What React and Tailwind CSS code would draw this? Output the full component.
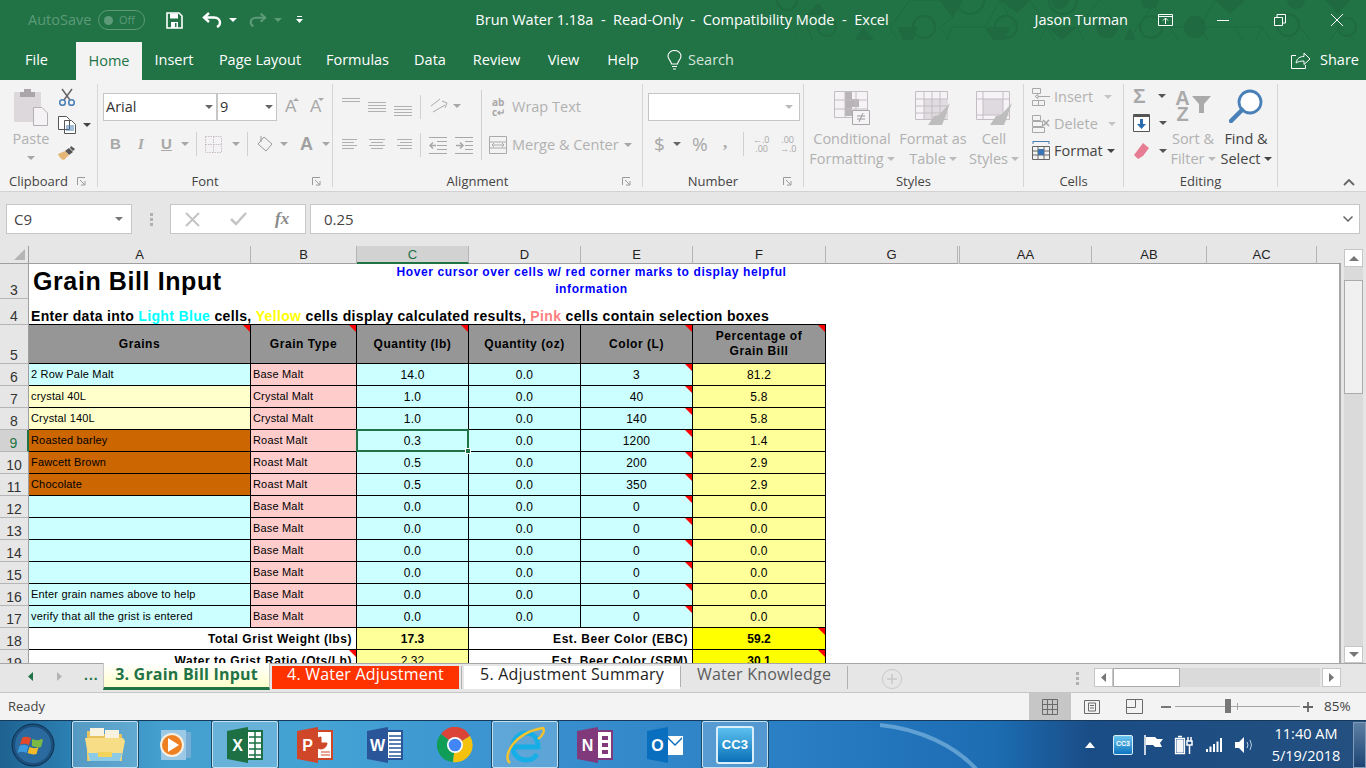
import React from "react";

const Caret = ({ c = "#a6a6a6", className = "" }) => (
  <svg width="8" height="4" viewBox="0 0 8 4" className={"shrink-0 " + className}><path d="M0 0h8L4 4z" fill={c} /></svg>
);

const Pattern = () => {
  const outC = [[787,0,10],[827,27,9],[924,27,11],[970,0,14],[1006,27,11],[1061,52,11],[1063,0,14],[1151,27,11],[1246,52,11],[1288,25,11],[1335,52,11],[1347,27,9]];
  const fillC = [[970,52,10],[1107,27,11],[1153,52,10],[1060,0,9],[1150,0,9],[1195,27,11],[1296,0,9]];
  const fillT = ["897,27 918,27 908,52","985,27 1010,27 1000,52","863,27 848,52 870,52 873,38","940,0 963,0 953,17","1000,0 1030,0 1017,13","1047,27 1077,27 1062,40","818,3 807,15 828,15","1095,27 1118,27 1107,14","1118,52 1140,52 1130,27","1215,0 1245,0 1230,14","1285,52 1310,52 1298,62","1325,0 1350,0 1338,14"];
  const lines = ["795,38 803,52 818,52 807,27 818,8 ","905,52 890,27 910,0 940,0 953,17 940,27 958,52 940,52 953,27","953,27 985,27 1000,0 1015,27","1033,52 1047,27 1062,52 1090,52 1077,27 1100,0","1123,52 1137,27 1153,5 1170,27 1185,52 1215,52 1200,27 1215,0","1235,27 1250,52 1262,27 1278,52 1300,27 1320,52 1340,27 1366,52","1170,27 1200,27 1230,27 1262,27","1030,27 1047,27 1030,0"];
  return (
    <svg className="absolute left-0 top-0 pointer-events-none" width="1366" height="80" viewBox="0 0 1366 80" fill="none">
      {lines.map((p, i) => <polyline key={i} points={p} stroke="#1f6a40" strokeWidth="1" />)}
      {outC.map(([x, y, r], i) => <circle key={i} cx={x} cy={y} r={r} stroke="#1f6a40" strokeWidth="2" />)}
      {fillC.map(([x, y, r], i) => <circle key={i} cx={x} cy={y} r={r} fill="#1f6a40" />)}
      {fillT.map((p, i) => <polygon key={i} points={p} fill="#1f6a40" />)}
    </svg>
  );
};

const TitleBar = () => (
  <div className="relative h-[40px] flex items-center bg-[#217346] text-white text-[14.5px]">
    <Pattern />
    <div className="relative flex items-center w-[460px] pl-[28px] shrink-0">
      <span className="text-[#5c9a78] w-[70px] whitespace-nowrap">AutoSave</span>
      <div className="w-[47px] h-[20px] rounded-full border border-[#5c9a78] flex items-center pl-[5px] text-[#5c9a78] text-[11px] gap-[6px]">
        <div className="w-[9px] h-[9px] rounded-full bg-[#5c9a78]" />Off
      </div>
      <svg className="ml-[21px]" width="17" height="17" viewBox="0 0 17 17"><path d="M1 1h12l3 3v12H1z" fill="none" stroke="#fff" strokeWidth="1.6" /><rect x="4" y="1.5" width="8" height="5" fill="#fff" /><rect x="5" y="10" width="7" height="6" fill="#fff" /><rect x="9" y="11" width="1.5" height="4" fill="#217346" /></svg>
      <svg className="ml-[19px]" width="21" height="16" viewBox="0 0 21 16" fill="none"><path d="M7 1L2 5.500 7 10" stroke="#fff" strokeWidth="2.400" /><path d="M2 5.500h10c4 0 6 2.500 6 5s-1 3.500-3 4.500" stroke="#fff" strokeWidth="2.400" /></svg>
      <Caret c="#fff" className="ml-[6px]" />
      <svg className="ml-[11px]" width="19" height="16" viewBox="0 0 21 16" fill="none"><path d="M14 1l5 4.500L14 10" stroke="#5c9a78" strokeWidth="2.400" /><path d="M19 5.500H9c-4 0-6 2.500-6 5s1 3.500 3 4.500" stroke="#5c9a78" strokeWidth="2.400" /></svg>
      <Caret c="#5c9a78" className="ml-[7px]" />
      <svg className="ml-[14px]" width="7" height="8" viewBox="0 0 7 8"><path d="M1 0h5v1H1zM0 3h7L3.500 7z" fill="#fff" /></svg>
    </div>
    <div className="relative w-[444px] shrink-0 text-center whitespace-pre">Brun Water 1.18a  -  Read-Only  -  Compatibility Mode  -  Excel</div>
    <div className="relative w-[224px] text-right shrink-0 whitespace-nowrap">Jason Turman</div>
    <div className="relative flex items-center">
      <svg className="ml-[30px]" width="15" height="12" viewBox="0 0 15 12" fill="none" stroke="#fff"><path d="M.5.500h14v11H.500zM.5 2.500h14M7.500 10V4.500M5 6.500l2.500-2.500L10 6.500" /></svg>
      <div className="ml-[44px] w-[12px] h-px bg-white" />
      <svg className="ml-[45px]" width="12" height="12" viewBox="0 0 12 12" fill="none" stroke="#fff"><path d="M.5 3.500h8v8h-8zM3 3V.500h8.500V9H9" /></svg>
      <svg className="ml-[45px]" width="12" height="12" viewBox="0 0 12 12" stroke="#fff"><path d="M0 0l12 12M12 0L0 12" /></svg>
    </div>
  </div>
);

const tabs = [["Insert","w-[64px]"],["Page Layout","w-[108px]"],["Formulas","w-[87px]"],["Data","w-[58px]"],["Review","w-[75px]"],["View","w-[59px]"],["Help","w-[60px]"]];

const TabBar = () => (
  <div className="relative h-[40px] flex items-end bg-[#217346] text-white text-[14.5px]">
    <div className="w-[51px] ml-[11px] mr-[14px] h-[40px] leading-[40px] text-center">File</div>
    <div className="w-[66px] h-[38px] leading-[38px] bg-[#f3f3f3] text-[#217346] text-center">Home</div>
    {tabs.map(([t, w]) => <div key={t} className={"h-[40px] leading-[40px] text-center whitespace-nowrap " + w}>{t}</div>)}
    <div className="flex items-center h-[40px] ml-[14px] text-[#d4e3da]">
      <svg width="15" height="20" viewBox="0 0 15 20" fill="none" stroke="#fff" strokeWidth="1.100"><path d="M4.500 14c0-3-3.500-4-3.500-8a6.500 5.500 0 0 1 13 0c0 4-3.500 5-3.500 8zM5 16.500h5M6 19h3" /></svg>
      <span className="ml-[6px]">Search</span>
    </div>
    <div className="flex items-center h-[40px] ml-auto mr-[7px] pr-0">
      <svg width="20" height="18" viewBox="0 0 20 18" fill="none" stroke="#fff"><path d="M5 4.500H.5v13h14V14M5 12c1-5 4-6.500 8-6.500V2l6 6-6 5.500V10c-3 0-6 .5-8 2z" /></svg>
      <span className="ml-[9px]">Share</span>
    </div>
  </div>
);

const Group = ({ w, label, launcher, children }) => (
  <div className={"flex flex-col h-[103px] shrink-0 border-r border-[#d6d6d6] " + w}>
    <div className="h-[91px] flex">{children}</div>
    <div className="flex items-center h-[12px] text-[13px] text-[#444]">
      <div className="flex-1 text-center leading-[12px] whitespace-nowrap">{label}</div>
      {launcher ? (
        <div className="w-[20px] flex">
          <svg width="9" height="9" viewBox="0 0 9 9" fill="none" stroke="#9a9a9a"><path d="M.5 8V.500H8M3 3l4.500 4.500M8 4v4H4" /></svg>
        </div>
      ) : null}
    </div>
  </div>
);

const Dis = "#a8a8a8";
const Lines = ({ ws, gap = 3, c = "#b0b0b0", align = "left" }) => (
  <svg width="18" height={ws.length * gap} viewBox={`0 0 18 ${ws.length * gap}`} stroke={c}>
    {ws.map((w, i) => {
      const x = align === "left" ? 0 : align === "center" ? (18 - w) / 2 : 18 - w;
      return <path key={i} d={`M${x} ${i * gap + 0.5}h${w}`} />;
    })}
  </svg>
);

const Clipboard = () => (
  <Group w="w-[98px]" label="Clipboard" launcher>
    <div className="w-[58px] flex flex-col items-center pt-[4px] pl-[4px]">
      <svg width="34" height="38" viewBox="0 0 34 38"><path d="M0 4h27v30H0z" fill="#dcd8dc" /><path d="M6 4h15v5H6zM10 1h7v4h-7z" fill="#a9a5a9" /><path d="M19.500 19.500H28l5.500 5.500v12.500h-14z" fill="#f6f3f6" stroke="#b4b0b4" /></svg>
      <span className="text-[14.5px] text-[#b1b1b1] leading-[20px] mt-[3px]">Paste</span>
      <Caret className="mt-[7px]" />
    </div>
    <div className="flex flex-col pt-[4px]">
      <svg width="18" height="18" viewBox="0 0 18 18" fill="none"><path d="M4 1l8 11M14 1L6 12" stroke="#666" strokeWidth="1.500" /><circle cx="4.500" cy="14.500" r="2.800" stroke="#4a7fb5" strokeWidth="1.500" /><circle cx="13.500" cy="14.500" r="2.800" stroke="#4a7fb5" strokeWidth="1.500" /></svg>
      <div className="flex items-center mt-[10px]">
        <svg width="18" height="18" viewBox="0 0 18 18" fill="#fff" stroke="#555"><path d="M.5.500h8l3 3v10H.500zM6.500 4.500h7l4 4v9h-11z" /><path d="M8 10h8M8 12h8M8 14h8" stroke="#4a7fb5" /></svg>
        <Caret c="#444" className="ml-[7px]" />
      </div>
      <svg className="mt-[11px]" width="18" height="16" viewBox="0 0 18 16"><path d="M11 3l4 4-4 3-4-4z" fill="#555" /><path d="M13 1l4 3-2 2-3-3z" fill="#555" /><path d="M7 6l4 4-5 5c-2 0-5-3-6-6z" fill="#e5b777" /></svg>
    </div>
  </Group>
);

const BigA = ({ up }) => (
  <div className="flex items-start w-[16px] h-[20px] text-[#a8a8a8] text-[17px] leading-[20px] [font-family:'Liberation_Sans',sans-serif]">
    <span>A</span>
    <svg className="-ml-[3px] mt-[1px] shrink-0" width="6" height="3" viewBox="0 0 6 3"><path d={up ? "M0 3l3-3 3 3z" : "M0 0h6L3 3z"} fill={Dis} /></svg>
  </div>
);

const Font = () => (
  <Group w="w-[235px]" label="Font" launcher>
    <div className="flex flex-col pl-[5px] pt-[9px]">
      <div className="flex items-center h-[28px]">
        <div className="w-[114px] h-[28px] bg-white border border-[#c6c6c6] flex items-center justify-between pl-[2px] pr-[3px] text-[14.5px] text-[#333]"><span>Arial</span><Caret c="#666" /></div>
        <div className="w-[60px] h-[28px] bg-white border border-[#c6c6c6] flex items-center justify-between pl-[2px] pr-[3px] text-[14.5px] text-[#333]"><span>9</span><Caret c="#666" /></div>
        <div className="ml-[8px]"><BigA up /></div>
        <div className="ml-[9px]"><BigA /></div>
      </div>
      <div className="flex items-center h-[24px] mt-[11px] text-[#a8a8a8]">
        <span className="ml-[7px] w-[27px] font-bold text-[15px] [font-family:'Liberation_Sans',sans-serif]">B</span>
        <span className="w-[24px] italic font-bold text-[15px] pl-[1px] [font-family:'Liberation_Serif',serif]">I</span>
        <span className="w-[20px] font-bold text-[15px] underline [font-family:'Liberation_Sans',sans-serif]">U</span>
        <Caret />
        <div className="ml-[7px] w-px h-[24px] bg-[#d0d0d0]" />
        <svg className="ml-[8px]" width="17" height="17" viewBox="0 0 17 17" fill="none" stroke="#c8bcc8" strokeDasharray="1.500 1"><path d="M.5.500h16v16H.500zM8.500.500v16M.5 8.500h16" /></svg>
        <Caret className="ml-[10px]" />
        <div className="ml-[7px] w-px h-[24px] bg-[#d0d0d0]" />
        <svg className="ml-[9px]" width="17" height="16" viewBox="0 0 17 16" fill="none" stroke="#999"><path d="M7 1l8 7-6 7-8-7zM4 0v6" /></svg>
        <Caret className="ml-[6px]" />
        <span className="ml-[12px] font-bold text-[18px] text-[#a0a0a0] leading-[20px] [font-family:'Liberation_Sans',sans-serif]">A</span>
        <Caret className="ml-[9px]" />
      </div>
    </div>
  </Group>
);

const Alignment = () => (
  <Group w="w-[310px]" label="Alignment" launcher>
    <div className="w-[148px] flex flex-col pl-[9px] pt-[14px] shrink-0">
      <div className="flex h-[21px] items-start">
        <div className="w-[26px]"><Lines ws={[18,18]} /></div>
        <div className="w-[26px] mt-[4px]"><Lines ws={[18,18,18,18]} /></div>
        <div className="w-[26px] mt-[8px]"><Lines ws={[18,18,18,18]} /></div>
        <div className="w-px h-[24px] -mt-[3px] bg-[#d0d0d0] shrink-0" />
        <svg className="ml-[8px] -mt-[1px]" width="20" height="16" viewBox="0 0 20 16" fill="none" stroke="#aaa"><path d="M2 9l9-7M4 15l12-7M13 4l5 2-2 5" /></svg>
        <Caret className="ml-[4px] mt-[6px]" />
      </div>
      <div className="flex h-[24px] items-center mt-[14px]">
        <div className="w-[26px]"><Lines ws={[15,12,15,12]} /></div>
        <div className="w-[26px]"><Lines ws={[16,12,16,12]} align="center" /></div>
        <div className="w-[26px]"><Lines ws={[15,12,15,12]} align="right" /></div>
        <div className="w-px h-[24px] bg-[#d0d0d0] shrink-0" />
        <svg className="ml-[8px]" width="18" height="17" viewBox="0 0 18 17" fill="none" stroke="#a8a8a8"><path d="M0 .500h18M8 4.500h10M8 8.500h10M8 12.500h10M0 16.500h18" /><path d="M7 8.500H1M4 5.500l-3 3 3 3" strokeWidth="1.500" /></svg>
        <svg className="ml-[8px]" width="18" height="17" viewBox="0 0 18 17" fill="none" stroke="#a8a8a8"><path d="M0 .500h18M10 4.500h8M10 8.500h8M10 12.500h8M0 16.500h18" /><path d="M1 8.500h7M5 5.500l3 3-3 3" strokeWidth="1.500" /></svg>
      </div>
    </div>
    <div className="flex flex-col border-l border-[#d0d0d0] h-[70px] mt-[6px]">
      <div className="flex items-center h-[28px] mt-[3px] pl-[10px]">
        <span className="text-[#a8a8a8] text-[10px] leading-[10px] font-bold w-[20px] whitespace-nowrap">ab<br />c↵</span>
        <span className="text-[14.5px] text-[#b1b1b1] whitespace-nowrap">Wrap Text</span>
      </div>
      <div className="flex items-center h-[24px] mt-[12px] pl-[7px]">
        <svg width="18" height="18" viewBox="0 0 18 18" fill="none" stroke="#aaa"><path d="M.5.500h17v17H.500zM.5 6h17M.5 12h17M3 9h12M3 9l2-2M3 9l2 2M15 9l-2-2M15 9l-2 2" /></svg>
        <span className="ml-[5px] w-[112px] text-[14.5px] text-[#b1b1b1] whitespace-nowrap">Merge &amp; Center</span>
        <Caret />
      </div>
    </div>
  </Group>
);

const NumberG = () => (
  <Group w="w-[161px]" label="Number" launcher>
    <div className="flex flex-col pl-[5px] pt-[9px]">
      <div className="w-[152px] h-[28px] bg-white border border-[#c6c6c6] flex items-center justify-end pr-[6px]"><Caret c="#bbb" /></div>
      <div className="flex items-center h-[24px] mt-[11px] text-[#a8a8a8]">
        <span className="ml-[6px] w-[19px] text-[19px] leading-[24px]">$</span>
        <Caret c="#666" />
        <span className="ml-[11px] w-[28px] text-[19px] leading-[24px]">%</span>
        <span className="w-[23px] pl-[3px] text-[17px] font-bold leading-[20px] -mt-[2px] [font-family:'Liberation_Serif',serif]">,</span>
        <div className="w-px h-[24px] bg-[#d0d0d0]" />
        <span className="ml-[9px] w-[15px] text-[9px] leading-[9px] text-right whitespace-nowrap">←.0<br />.00</span>
        <span className="ml-[12px] w-[14px] text-[9px] leading-[9px] text-right whitespace-nowrap">.00<br />→.0</span>
      </div>
    </div>
  </Group>
);

const StyleBtn = ({ w, l1, l2, children }) => (
  <div className={"flex flex-col items-center shrink-0 " + w}>
    <div className="h-[45px] flex items-start pt-[7px]">{children}</div>
    <div className="text-[14.5px] text-[#b1b1b1] leading-[20px] whitespace-nowrap text-center">{l1}</div>
    <div className="text-[14.5px] text-[#b1b1b1] leading-[20px] whitespace-nowrap flex items-center gap-[3px]">{l2}<Caret c="#bbb" /></div>
  </div>
);

const GridIcon = ({ children, w = 38 }) => (
  <svg width={w} height="36" viewBox="0 0 36 36" fill="none">{children}</svg>
);

const Styles = () => (
  <Group w="w-[220px]" label="Styles">
    <StyleBtn w="w-[96px]" l1="Conditional" l2="Formatting">
      <GridIcon>
        <path d="M.5.500h33v26H.500z" fill="#f6f3f6" stroke="#c4bec4" />
        <path d="M11 1h7v7h7v8h-7v9h-7z" fill="#b8b4b8" />
        <path d="M.5 9h33M.5 18h33M11 .500v26M22 .500v26" stroke="#c4bec4" />
        <path d="M18.500 19.500h17v14h-17z" fill="#f6f3f6" stroke="#a8a8a8" /><path d="M23 25h8M23 28h8M29 22l-4 9" stroke="#999" />
      </GridIcon>
    </StyleBtn>
    <StyleBtn w="w-[66px]" l1="Format as" l2="Table">
      <GridIcon>
        <path d="M.5.500h32v28H.500z" fill="#f6f3f6" stroke="#c4bec4" /><path d="M9 8h24v20H9z" fill="#e0dce0" />
        <path d="M.5 8h32M.5 15h32M.5 22h32M9 .500v28M17 .500v28M25 .500v28" stroke="#c4bec4" />
        <path d="M35 12L24 24l-5 1-6 9h14l2-5z" fill="#bdbdbd" />
      </GridIcon>
    </StyleBtn>
    <StyleBtn w="w-[56px]" l1="Cell" l2="Styles">
      <GridIcon>
        <path d="M.5.500h33v28H.500z" fill="#f6f3f6" stroke="#c4bec4" /><path d="M7 8h20v16H7z" fill="#dfdadf" />
        <path d="M.5 8h33M.5 24h33M7 .500v28M27 .500v28" stroke="#c4bec4" />
        <path d="M36 12L25 24l-5 1-6 9h14l2-5z" fill="#bdbdbd" />
      </GridIcon>
    </StyleBtn>
  </Group>
);

const Cells = () => (
  <Group w="w-[100px]" label="Cells">
    <div className="flex flex-col pl-[8px] -mt-[1px] text-[14.5px]">
      <div className="flex items-center h-[27px] text-[#b1b1b1]">
        <svg width="18" height="18" viewBox="0 0 18 18" fill="none" stroke="#a8a8a8"><path d="M.5.500h8v5h-8zM.5 12.500h12v5H.500zM6.500 12.500v5M6 8.500H18M3 8.500l3-2v4z" /></svg>
        <span className="ml-[4px] w-[50px]">Insert</span><Caret c="#c4c4c4" />
      </div>
      <div className="flex items-center h-[27px] text-[#b1b1b1]">
        <svg width="18" height="18" viewBox="0 0 18 18" fill="none" stroke="#a8a8a8"><path d="M.5.500h8v5h-8zM.5 12.500h12v5H.500zM.5 6.500h10v5H.500z" /><path d="M11 5l6 6M17 5l-6 6" strokeWidth="1.600" /></svg>
        <span className="ml-[4px] w-[54px]">Delete</span><Caret c="#c4c4c4" />
      </div>
      <div className="flex items-center h-[27px] text-[#444]">
        <svg width="18" height="20" viewBox="0 0 18 20" fill="none"><path d="M1 .500h16M1 0v3M17 0v3" stroke="#4a7fb5" /><path d="M.5 5.500h17v13H.500zM.5 10h17M.5 14h17M6 5.500v13M12 5.500v13" stroke="#666" /><rect x="6" y="8" width="6" height="6" fill="#3a74b2" /></svg>
        <span className="ml-[4px]">Format</span><Caret c="#444" className="ml-[4px]" />
      </div>
    </div>
  </Group>
);

const Editing = () => (
  <Group w="w-[154px]" label="Editing">
    <div className="flex flex-col w-[48px] pl-[9px] pt-[2px] shrink-0">
      <div className="flex items-center h-[20px]">
        <span className="w-[16px] text-[21px] font-bold text-[#a8a8a8] leading-[20px] [font-family:'Liberation_Sans',sans-serif]">Σ</span>
        <Caret c="#555" className="ml-[9px]" />
      </div>
      <div className="flex items-center mt-[8px] h-[18px]">
        <svg width="17" height="18" viewBox="0 0 17 18" fill="#fff"><path d="M.5.500h16v17H.500z" stroke="#555" /><path d="M1 1h15v2H1z" fill="#555" /><path d="M7 5h3v5h3l-4.500 5L4 10h3z" fill="#2b6cb0" /></svg>
        <Caret c="#555" className="ml-[9px]" />
      </div>
      <div className="flex items-center mt-[10px] h-[17px]">
        <svg width="17" height="17" viewBox="0 0 17 17"><path d="M10 1l6 5-6 8-5 3-4-4z" fill="#e77d93" /></svg>
        <Caret c="#555" className="ml-[9px]" />
      </div>
    </div>
    <div className="flex flex-col items-center w-[46px] pt-[6px] shrink-0 -ml-[2px]">
      <div className="h-[33px] flex items-start text-[#aaa] font-bold text-[20px] leading-[16px] [font-family:'Liberation_Sans',sans-serif]">
        <span className="text-center">A<br />Z</span>
        <svg className="ml-[2px] mt-[6px]" width="19" height="17" viewBox="0 0 19 17"><path d="M0 0h19L12 8v9H7V8z" fill="#aaa" /></svg>
      </div>
      <div className="text-[14.5px] text-[#b1b1b1] leading-[20px] mt-[6px] whitespace-nowrap">Sort &amp;</div>
      <div className="text-[14.5px] text-[#b1b1b1] leading-[20px] whitespace-nowrap flex items-center gap-[3px]">Filter<Caret c="#bbb" /></div>
    </div>
    <div className="flex flex-col items-center w-[60px] pt-[5px] shrink-0">
      <svg className="h-[34px]" width="34" height="34" viewBox="0 0 34 34" fill="none"><circle cx="21" cy="13" r="11" stroke="#4a80b8" strokeWidth="2.800" fill="#fff" /><path d="M13 21L2 32" stroke="#4a80b8" strokeWidth="4.500" strokeLinecap="round" /></svg>
      <div className="text-[14.5px] text-[#444] leading-[20px] mt-[6px] whitespace-nowrap">Find &amp;</div>
      <div className="text-[14.5px] text-[#444] leading-[20px] whitespace-nowrap flex items-center gap-[3px]">Select<Caret c="#444" /></div>
    </div>
  </Group>
);

const Ribbon = () => (
  <div className="h-[112px] flex pt-[4px] bg-[#f3f3f3] border-b border-[#d2d2d2] box-border">
    <Clipboard /><Font /><Alignment /><NumberG /><Styles /><Cells /><Editing />
    <div className="flex-1 flex items-end justify-end pr-[11px] pb-[5px]">
      <svg width="12" height="7" viewBox="0 0 12 7" fill="none" stroke="#666" strokeWidth="1.800"><path d="M1 6l5-5 5 5" /></svg>
    </div>
  </div>
);

const FormulaBar = () => (
  <div className="h-[54px] flex items-start pt-[12px] pl-[6px] bg-[#e6e6e6] text-[15px] text-[#444]">
    <div className="w-[126px] h-[30px] bg-white border border-[#c6c6c6] flex items-center justify-between pl-[7px] pr-[8px]"><span>C9</span><Caret c="#777" /></div>
    <div className="w-[38px] h-[30px] flex flex-col items-center justify-center gap-[2px]">
      <div className="w-[3px] h-[3px] bg-[#b0b0b0]" /><div className="w-[3px] h-[3px] bg-[#b0b0b0]" /><div className="w-[3px] h-[3px] bg-[#b0b0b0]" />
    </div>
    <div className="w-[136px] h-[30px] bg-white border border-[#c6c6c6] flex items-center pl-[14px]">
      <svg width="15" height="15" viewBox="0 0 15 15" stroke="#c4c4c4" strokeWidth="2"><path d="M1 1l13 13M14 1L1 14" /></svg>
      <svg className="ml-[30px]" width="17" height="14" viewBox="0 0 17 14" fill="none" stroke="#c4c4c4" strokeWidth="2.500"><path d="M1 7l5 5L16 1" /></svg>
      <span className="ml-[28px] text-[17px] italic font-bold text-[#8a8a8a] [font-family:'Liberation_Serif',serif]">fx</span>
    </div>
    <div className="ml-[4px] w-[1050px] h-[30px] bg-white border border-[#c6c6c6] flex items-center justify-between pl-[13px] pr-[6px]">
      <span>0.25</span>
      <svg width="10" height="6" viewBox="0 0 10 6" fill="none" stroke="#666" strokeWidth="1.500"><path d="M.5.500l4.500 4.500L9.500.500" /></svg>
    </div>
  </div>
);

const ColH = ({ w, t, sel }) => (
  <div className={"h-[18px] text-center text-[13px] leading-[18px] text-[#222] border-r border-[#b5b5b5] shrink-0 " + w + (sel ? " bg-[#d2d2d2] border-b-2 border-b-[#217346] text-[#217346]" : " border-b border-b-[#9f9f9f]")}>{t}</div>
);

const ColHeaders = () => (
  <div className="flex h-[18px] bg-[#e6e6e6] [font-family:'Liberation_Sans',sans-serif]">
    <div className="w-[29px] h-[18px] flex items-end justify-end pr-[3px] pb-[3px] border-r border-b border-[#9f9f9f] shrink-0">
      <svg width="11" height="11" viewBox="0 0 11 11"><path d="M11 0v11H0z" fill="#b5b5b5" /></svg>
    </div>
    <ColH w="w-[222px]" t="A" />
    <ColH w="w-[106px]" t="B" />
    <ColH w="w-[112px]" t="C" sel />
    <ColH w="w-[112px]" t="D" />
    <ColH w="w-[112px]" t="E" />
    <ColH w="w-[133px]" t="F" />
    <ColH w="w-[132px]" t="G" />
    <div className="w-[2px] h-[18px] border-r border-b border-[#b5b5b5] shrink-0" />
    <ColH w="w-[132px]" t="AA" />
    <ColH w="w-[115px]" t="AB" />
    <ColH w="w-[110px]" t="AC" />
    <div className="w-[24px] h-[18px] border-b border-[#9f9f9f]" />
  </div>
);

const RowH = ({ n, sel }) => (
  <div className={"flex items-end justify-center text-[14px] leading-[15px] border-b border-[#b5b5b5] " + (sel ? "bg-[#d2d2d2] text-[#217346] border-r-2 border-r-[#217346]" : "bg-[#e6e6e6] text-[#333] border-r border-r-[#9f9f9f]")}>{n}</div>
);

const Corner = () => <span className="absolute right-0 top-0 w-0 h-0 border-l-[7px] border-l-transparent border-t-[7px] border-t-[#ff0000]" />;

const Hd = ({ children, mark }) => (
  <div className="relative flex items-center justify-center text-center bg-[#969696] border-r border-b border-black font-bold text-[12px] leading-[15px] tracking-[0.55px] text-black">{children}{mark ? <Corner /> : null}</div>
);

const Cell = ({ bg, center, mark, children }) => (
  <div className={"relative flex items-center border-r border-b border-black text-black whitespace-nowrap " + bg + (center ? " justify-center text-[12px] tracking-[0.2px]" : " pl-[2px] text-[11px] tracking-[0.18px]")}>
    {children}{mark ? <Corner /> : null}
  </div>
);

const data = [
  [6,"2 Row Pale Malt","bg-[#ccffff]","Base Malt","14.0","3","81.2"],
  [7,"crystal 40L","bg-[#ffffcc]","Crystal Malt","1.0","40","5.8"],
  [8,"Crystal 140L","bg-[#ffffcc]","Crystal Malt","1.0","140","5.8"],
  [9,"Roasted barley","bg-[#cc6600]","Roast Malt","0.3","1200","1.4"],
  [10,"Fawcett Brown","bg-[#cc6600]","Roast Malt","0.5","200","2.9"],
  [11,"Chocolate","bg-[#cc6600]","Roast Malt","0.5","350","2.9"],
  [12,"","bg-[#ccffff]","Base Malt","0.0","0","0.0"],
  [13,"","bg-[#ccffff]","Base Malt","0.0","0","0.0"],
  [14,"","bg-[#ccffff]","Base Malt","0.0","0","0.0"],
  [15,"","bg-[#ccffff]","Base Malt","0.0","0","0.0"],
  [16,"Enter grain names above to help","bg-[#ccffff]","Base Malt","0.0","0","0.0"],
  [17,"verify that all the grist is entered","bg-[#ccffff]","Base Malt","0.0","0","0.0"],
];

const Summary = ({ n, l1, v1, l2, v2, mark }) => (
  <>
    <RowH n={n} />
    <div className="relative col-span-2 flex items-center justify-end pr-[4px] bg-white border-r border-b border-black font-bold text-[12px] tracking-[0.55px] text-black whitespace-nowrap">{l1}{mark ? <Corner /> : null}</div>
    <div className={"flex items-center justify-center bg-[#ffff99] border-r border-b border-black text-[12px] text-black " + (mark ? "" : "font-bold")}>{v1}</div>
    <div className="col-span-2 flex items-center justify-end pr-[4px] bg-white border-r border-b border-black font-bold text-[12px] tracking-[0.55px] text-black whitespace-nowrap">{l2}</div>
    <div className="relative flex items-center justify-center bg-[#ffff00] border-r border-b border-black font-bold text-[12px] text-black">{v2}<Corner /></div>
  </>
);

const Sheet = () => (
  <div className="flex-1 min-w-0 h-[399px] overflow-hidden bg-white border-r-2 border-[#a6a6a6] [font-family:'Liberation_Sans',sans-serif]">
    <div className="grid grid-cols-[29px_222px_106px_112px_112px_112px_133px] grid-rows-[35px_26px_39px_repeat(14,22px)] w-[826px]">
      <RowH n={3} />
      <div className="col-span-2 flex items-center pl-[4px] font-bold text-[25px] tracking-[0.6px] text-black whitespace-nowrap">Grain Bill Input</div>
      <div className="col-span-4 text-center font-bold text-[12px] leading-[17px] tracking-[0.6px] text-[#0000ff]">Hover cursor over cells w/ red corner marks to display helpful<br />information</div>
      <RowH n={4} />
      <div className="col-span-6 flex items-end pl-[2px] font-bold text-[14px] leading-[16px] tracking-[0.34px] text-black whitespace-nowrap border-b border-black">
        <span>Enter data into&nbsp;</span><span className="text-[#00ffff]">Light Blue</span><span>&nbsp;cells,&nbsp;</span><span className="text-[#ffff00]">Yellow</span><span>&nbsp;cells display calculated results,&nbsp;</span><span className="text-[#ff8080]">Pink</span><span>&nbsp;cells contain selection boxes</span>
      </div>
      <RowH n={5} />
      <Hd mark>Grains</Hd>
      <Hd mark>Grain Type</Hd>
      <Hd mark>Quantity (lb)</Hd>
      <Hd>Quantity (oz)</Hd>
      <Hd mark>Color (L)</Hd>
      <Hd mark>Percentage of<br />Grain Bill</Hd>
      {data.map(([n, a, bg, b, c, e, f]) => (
        <React.Fragment key={n}>
          <RowH n={n} sel={n === 9} />
          <Cell bg={bg}>{a}</Cell>
          <Cell bg="bg-[#ffcccc]">{b}</Cell>
          <Cell bg="bg-[#ccffff]" center>
            {c}
            {n === 9 ? (
              <span className="absolute -left-px -top-px -right-px -bottom-px border-2 border-[#217346] z-10">
                <span className="absolute -right-[4px] -bottom-[4px] w-[6px] h-[6px] bg-[#217346] border border-white" />
              </span>
            ) : null}
          </Cell>
          <Cell bg="bg-[#ccffff]" center>0.0</Cell>
          <Cell bg="bg-[#ccffff]" center mark>{e}</Cell>
          <Cell bg="bg-[#ffff99]" center>{f}</Cell>
        </React.Fragment>
      ))}
      <Summary n={18} l1="Total Grist Weight (lbs)" v1="17.3" l2="Est. Beer Color (EBC)" v2="59.2" />
      <Summary n={19} l1="Water to Grist Ratio (Qts/Lb)" v1="2.32" l2="Est. Beer Color (SRM)" v2="30.1" mark />
    </div>
  </div>
);

const VScroll = () => (
  <div className="w-[25px] h-[417px] shrink-0 bg-[#e6e6e6] flex flex-col items-center -mt-[18px] relative">
    <div className="w-[19px] flex flex-col h-[417px] pt-[3px]">
      <div className="h-[18px] bg-white border border-[#c6c6c6] flex items-center justify-center"><svg width="10" height="5" viewBox="0 0 10 5"><path d="M5 0l5 5H0z" fill="#777" /></svg></div>
      <div className="h-[13px] bg-[#dadada]" />
      <div className="h-[114px] bg-[#f0f0f0] border border-[#ababab]" />
      <div className="flex-1 bg-[#dadada]" />
      <div className="h-[17px] bg-white border border-[#c6c6c6] flex items-center justify-center"><svg width="10" height="5" viewBox="0 0 10 5"><path d="M0 0h10L5 5z" fill="#777" /></svg></div>
    </div>
  </div>
);

const SheetTabs = () => (
  <div className="h-[29px] flex bg-[#e6e6e6] border-t border-[#a6a6a6] text-[16px] tracking-[0.2px] box-border">
    <div className="w-[103px] flex items-center pl-[28px] pb-[3px] shrink-0 [font-family:'Liberation_Sans',sans-serif]">
      <svg width="5" height="9" viewBox="0 0 5 9"><path d="M5 0v9L0 4.500z" fill="#217346" /></svg>
      <svg className="ml-[24px]" width="5" height="9" viewBox="0 0 5 9"><path d="M0 0v9l5-4.500z" fill="#b5b5b5" /></svg>
      <span className="ml-[22px] text-[#217346] font-bold text-[14px] leading-[16px] tracking-[1px] -mt-[4px]">...</span>
    </div>
    <div className="w-[167px] h-[27px] -mt-px shrink-0 bg-[linear-gradient(#ffffff,#ffffcc)] border-b-[3px] border-[#217346] border-x border-x-[#c6c6c6] text-center font-bold text-[#217346] leading-[23px]">3. Grain Bill Input</div>
    <div className="w-[187px] ml-[2px] mt-[2px] h-[23px] shrink-0 bg-[#ff3300] text-center text-white leading-[17px]">4. Water Adjustment</div>
    <div className="ml-[2px] mt-[2px] w-px h-[23px] bg-[#b0b0b0]" />
    <div className="w-[216px] ml-[2px] mt-[2px] h-[23px] shrink-0 bg-white text-center text-[#222] leading-[17px]">5. Adjustment Summary</div>
    <div className="w-px mt-[2px] h-[21px] bg-[#b0b0b0]" />
    <div className="w-[167px] h-[23px] mt-[2px] shrink-0 text-center text-[#5c5c5c] leading-[17px] border-r border-[#b0b0b0]">Water Knowledge</div>
    <div className="ml-[34px] mt-[5px] w-[20px] h-[20px] rounded-full border border-[#c8c8c8] flex items-center justify-center shrink-0">
      <svg width="10" height="10" viewBox="0 0 10 10" stroke="#c8c8c8" strokeWidth="1.500"><path d="M5 0v10M0 5h10" /></svg>
    </div>
    <div className="ml-[174px] mt-[8px] flex flex-col gap-[2px] w-[3px] shrink-0">
      <div className="h-[3px] bg-[#b0b0b0]" /><div className="h-[3px] bg-[#b0b0b0]" /><div className="h-[3px] bg-[#b0b0b0]" />
    </div>
    <div className="ml-[15px] mt-[4px] h-[19px] flex w-[247px] shrink-0">
      <div className="w-[19px] bg-white border border-[#c6c6c6] flex items-center justify-center"><svg width="5" height="9" viewBox="0 0 5 9"><path d="M5 0v9L0 4.500z" fill="#777" /></svg></div>
      <div className="w-[67px] bg-white border border-[#ababab]" />
      <div className="flex-1 bg-[#dadada]" />
      <div className="w-[19px] ml-[2px] bg-white border border-[#c6c6c6] flex items-center justify-center"><svg width="5" height="9" viewBox="0 0 5 9"><path d="M0 0v9l5-4.500z" fill="#777" /></svg></div>
    </div>
  </div>
);

const StatusBar = () => (
  <div className="h-[28px] flex items-center bg-[#f3f3f3] border-t border-[#c6c6c6] text-[13px] text-[#444] box-border">
    <span className="ml-[8px]">Ready</span>
    <div className="ml-auto flex items-center h-[27px]">
      <div className="w-[42px] h-[27px] bg-[#c6c6c6] flex items-center justify-center">
        <svg width="16" height="16" viewBox="0 0 16 16" fill="none" stroke="#6a6a6a"><path d="M.5.500h15v15H.500zM5.500.500v15M10.500.500v15M.5 5.500h15M.5 10.500h15" /></svg>
      </div>
      <div className="w-[42px] flex items-center justify-center">
        <svg width="16" height="14" viewBox="0 0 16 14" fill="none" stroke="#6a6a6a"><path d="M.5.500h15v13H.500zM4.500 3h7v8h-7zM6 5.500h4M6 8h4" /></svg>
      </div>
      <div className="w-[42px] flex items-center justify-center">
        <svg width="17" height="15" viewBox="0 0 17 15" fill="none" stroke="#6a6a6a"><path d="M.5.500h16v14H.500zM.5 8.500h9v-8" /></svg>
      </div>
      <div className="ml-[6px] w-[10px] h-[2px] bg-[#777]" />
      <div className="relative ml-[4px] w-[125px] h-px bg-[#a6a6a6]">
        <div className="absolute left-[50px] -top-[7px] w-[6px] h-[14px] bg-[#777]" />
        <div className="absolute left-[62px] -top-[3px] w-px h-[7px] bg-[#a6a6a6]" />
      </div>
      <svg className="ml-[3px]" width="10" height="10" viewBox="0 0 10 10" stroke="#666" strokeWidth="1.800"><path d="M5 0v10M0 5h10" /></svg>
      <span className="ml-[11px] mr-[15px] w-[27px] text-[13.5px]">85%</span>
    </div>
  </div>
);

const TaskSlot = ({ active, children }) => (
  <div className="w-[70px] h-[48px] shrink-0 flex items-center justify-center px-[2px]">
    <div className={"w-[66px] h-[47px] flex items-center justify-center rounded-[2px] " + (active ? "bg-[#ffffff30] border border-[#c5e0f0] shadow-[0_0_0_1px_#1a4a6a]" : "")}>{children}</div>
  </div>
);

const OfficeIcon = ({ bg, letter, lines }) => (
  <svg width="36" height="36" viewBox="0 0 36 36">
    <path d="M20 4h15v28H20z" fill="#fff" stroke={bg} strokeWidth="2" />
    {lines}
    <path d="M0 4l21-4v36L0 32z" fill={bg} />
    <text x="10.500" y="24" textAnchor="middle" fontSize="16" fontWeight="700" fill="#fff" fontFamily="Liberation Sans, sans-serif">{letter}</text>
  </svg>
);

const Taskbar = () => (
  <div className="relative h-[48px] flex items-center border-t border-[#16385a] bg-[linear-gradient(90deg,#1d6290_0%,#2f85b8_6%,#45a0cf_12%,#44a2d4_24%,#3a91cf_38%,#2a7ec4_58%,#1c6cb2_73%,#1a4c85_80%,#24507f_100%)] text-white">
    <svg className="absolute left-[880px] top-0 opacity-60 pointer-events-none" width="110" height="48" viewBox="0 0 110 48" fill="none"><path d="M0 4C40 8 75 25 96 48" stroke="#8dc0e6" strokeWidth="4" /></svg>
    <div className="relative w-[70px] h-[47px] flex items-center justify-center shrink-0 pr-[4px]">
      <svg width="44" height="44" viewBox="0 0 44 44">
        <circle cx="22" cy="22" r="21" fill="#1d4f7c" stroke="#0c2f4f" />
        <circle cx="22" cy="22" r="18" fill="#2a6a9f" />
        <path d="M11 15c3-2 6-1 9 0l-2 7c-3-1-6-2-9 0z" fill="#e2492a" />
        <path d="M21 16c3 1 6 2 9 0 1 0 2 1 2 1l-2 7c-3 1-6 0-9-1z" fill="#7ab943" />
        <path d="M8.500 23c3-2 6-1 9 0l-2 7c-3-1-6-2-9 0z" fill="#3c9ade" />
        <path d="M18.500 24c3 1 6 2 9 0l-2 7c-3 1-6 0-9-1z" fill="#f3bb2a" />
      </svg>
    </div>
    <TaskSlot active>
      <svg width="40" height="36" viewBox="0 0 40 36">
        <path d="M2 4h12l3 3h20v27H2z" fill="#e7c35e" />
        <path d="M5 1h14v8H5zM20 3h14v8H20z" fill="#f7f3e0" />
        <path d="M0 11h38l2 3-4 20H4z" fill="#f7dd85" />
        <path d="M3 26h34l-2 8H5z" fill="#8ccbe6" />
        <path d="M13 25h14v5H13z" fill="#f3d35a" />
      </svg>
    </TaskSlot>
    <TaskSlot>
      <svg width="34" height="34" viewBox="0 0 34 34"><path d="M3 2h25v30H3z" fill="#9cc9e6" /><path d="M28 4h5v26h-5z" fill="#74acd4" /><circle cx="14" cy="17" r="11" fill="#ee8022" stroke="#f7f0e0" strokeWidth="2" /><path d="M10 10l11 7-11 7z" fill="#fff" /></svg>
    </TaskSlot>
    <TaskSlot active>
      <OfficeIcon bg="#1d7044" letter="X" lines={<path d="M22 10h12M22 16h12M22 22h12M22 28h12M28 4v28" stroke="#1d7044" strokeWidth="1.500" />} />
    </TaskSlot>
    <TaskSlot>
      <OfficeIcon bg="#cf4629" letter="P" lines={<path d="M24 10a6 6 0 1 0 6 6h-6zM24 25h9M24 28h9" fill="#cf4629" stroke="#cf4629" />} />
    </TaskSlot>
    <TaskSlot>
      <OfficeIcon bg="#2a5699" letter="W" lines={<path d="M22 9h12M22 13h12M22 17h12M22 21h12M22 25h12M22 29h12" stroke="#2a5699" strokeWidth="1.500" />} />
    </TaskSlot>
    <TaskSlot>
      <svg width="36" height="36" viewBox="0 0 36 36">
        <path d="M18 18L33 9A17 17 0 0 0 4 7z" fill="#db4437" />
        <path d="M18 18L4 7A17 17 0 0 0 16 35z" fill="#0f9d58" />
        <path d="M18 18l-2 17A17 17 0 0 0 33 9z" fill="#f4c20d" />
        <circle cx="18" cy="18" r="8" fill="#fff" /><circle cx="18" cy="18" r="6.300" fill="#4285f4" />
      </svg>
    </TaskSlot>
    <TaskSlot active>
      <div className="relative w-[40px] h-[40px] flex items-center justify-center">
        <svg width="40" height="40" viewBox="0 0 40 40" fill="none">
          <path d="M8 22h25c0-9-5-14-12-14S8 14 8 22s6 13 13 13c5 0 9-2 11-6" stroke="#17aee6" strokeWidth="5" />
          <path d="M5 38C-3 32 8 8 38 3c2 2 0 8-5 11" stroke="#f2c230" strokeWidth="2.500" />
        </svg>
      </div>
    </TaskSlot>
    <TaskSlot>
      <OfficeIcon bg="#80397b" letter="N" lines={<path d="M25 9h6v4h-6zM25 16h6v4h-6zM25 23h6v4h-6z" fill="#80397b" />} />
    </TaskSlot>
    <TaskSlot>
      <svg width="36" height="36" viewBox="0 0 36 36">
        <path d="M20 9h16v19H20z" fill="#fff" /><path d="M21 10l7 7 7-7v2l-7 7-7-7z" fill="#0a6ebf" />
        <path d="M0 4l21-4v36L0 32z" fill="#0a6ebf" />
        <text x="10.500" y="24" textAnchor="middle" fontSize="16" fontWeight="700" fill="#fff" fontFamily="Liberation Sans, sans-serif">O</text>
      </svg>
    </TaskSlot>
    <TaskSlot active>
      <div className="w-[38px] h-[38px] rounded-[3px] border-2 border-[#d9eef9] bg-[linear-gradient(#5bc0ee,#0a70b8)] flex items-center justify-center text-[13px] font-bold text-white tracking-[0.2px] [font-family:'Liberation_Sans',sans-serif]">CC3</div>
    </TaskSlot>
    <div className="relative flex items-center ml-auto h-[47px]">
      <svg width="10" height="6" viewBox="0 0 10 6"><path d="M5 0l5 6H0z" fill="#fff" /></svg>
      <div className="ml-[18px] w-[20px] h-[20px] rounded-[2px] bg-[linear-gradient(#6cc6ef,#0d74c0)] border border-[#d9eef9] flex items-center justify-center text-[7px] font-bold text-white [font-family:'Liberation_Sans',sans-serif]">CC3</div>
      <svg className="ml-[11px]" width="19" height="20" viewBox="0 0 19 20"><path d="M1 0v20" stroke="#fff" strokeWidth="1.500" /><path d="M2 2h9l2 2h6l-3 4 2 4h-7l-2-2H2z" fill="#fff" /></svg>
      <svg className="ml-[11px]" width="19" height="20" viewBox="0 0 19 20" fill="none" stroke="#fff"><path d="M1.500 3.500h9v15h-9zM4 1.500h4" strokeWidth="1.300" /><path d="M3 5h6v12H3z" fill="#fff" opacity=".95" /><path d="M13 6h5v4h-5zM15.500 10v9M14 2v4M17 2v4" strokeWidth="1.500" /></svg>
      <svg className="ml-[13px]" width="16" height="14" viewBox="0 0 16 14" fill="#fff"><path d="M0 11h2v3H0zM3.500 8.500h2V14h-2zM7 6h2v8H7zM10.500 3.500h2V14h-2zM14 0h2v14h-2z" /></svg>
      <svg className="ml-[13px]" width="19" height="18" viewBox="0 0 19 18" fill="none"><path d="M0 6h4l5-5v16l-5-5H0z" fill="#fff" /><path d="M12 6q2 3 0 6M15 4q3 5 0 10" stroke="#b8cde0" /></svg>
      <div className="ml-[6px] w-[92px] text-center text-[14.5px] leading-[22px] text-white whitespace-nowrap">
        <div>11:40 AM</div><div>5/19/2018</div>
      </div>
      <div className="w-[13px] ml-px h-[46px] border border-[#7f9bb8] bg-[linear-gradient(#5d7fa3,#1c4474)]" />
    </div>
  </div>
);

export default function App() {
  return (
    <div className="w-[1366px] h-[768px] flex flex-col overflow-hidden bg-[#e6e6e6] [font-family:'Open_Sans',sans-serif]">
      <TitleBar />
      <TabBar />
      <Ribbon />
      <FormulaBar />
      <ColHeaders />
      <div className="flex h-[399px]">
        <Sheet />
        <VScroll />
      </div>
      <SheetTabs />
      <StatusBar />
      <Taskbar />
    </div>
  );
}
